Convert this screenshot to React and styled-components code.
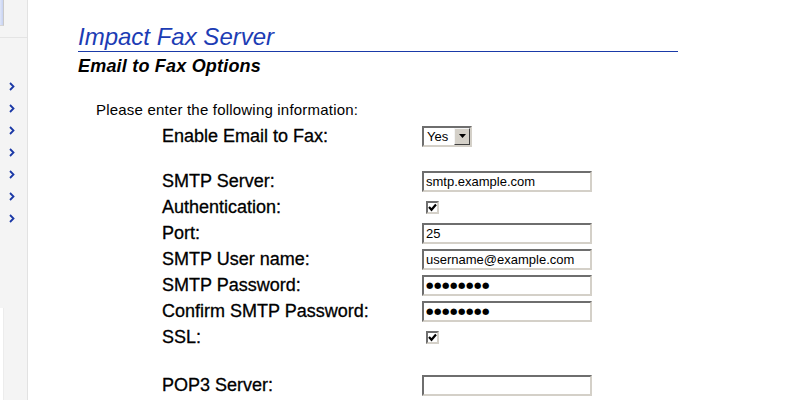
import React from "react";
import styled, { createGlobalStyle } from "styled-components";

const Global = createGlobalStyle`
  html, body { margin: 0; padding: 0; background: #ffffff; }
  body { font-family: "Liberation Sans", Arial, sans-serif; color: #000; }
`;

const Page = styled.div`
  display: flex;
  min-height: 400px;
  width: 800px;
  overflow: hidden;
`;

const Sidebar = styled.nav`
  position: relative;
  width: 27px;
  flex: none;
  background: #f4f4f4;
  border-right: 1px solid #e2e2e2;
  display: flex;
  flex-direction: column;
`;

const LogoStub = styled.div`
  width: 3px;
  height: 25px;
  background: linear-gradient(90deg, #dfe6f8, #c7d2f2);
  border-right: 1px solid #c9c9c9;
  border-bottom: 1px solid #d6d6d6;
`;

const SideRule = styled.div`
  margin-top: 11px;
  height: 1px;
  background: #e4e4e4;
`;

const NavList = styled.ul`
  list-style: none;
  margin: 44px 0 0 0;
  padding: 0;
  display: flex;
  flex-direction: column;
  gap: 13px;
`;

const NavItem = styled.li`
  height: 9px;
  padding-left: 9px;
  display: flex;
  align-items: center;
  color: #1a38a6;
`;

const WhiteStrip = styled.div`
  position: absolute;
  left: 0;
  top: 308px;
  bottom: 0;
  width: 3px;
  background: #ffffff;
  border-right: 1px solid #ececec;
`;

const Main = styled.main`
  flex: 1;
  padding-left: 50px;
`;

const Title = styled.h1`
  margin: 0;
  padding-top: 23px;
  width: 600px;
  font-size: 24px;
  line-height: 28px;
  font-style: italic;
  font-weight: normal;
  color: #1c3cb4;
  border-bottom: 1px solid #1a3aa8;
`;

const Subtitle = styled.h2`
  margin: 3px 0 0 0;
  font-size: 18px;
  line-height: 22px;
  font-style: italic;
  font-weight: bold;
  letter-spacing: 0.2px;
`;

const Intro = styled.p`
  margin: 24px 0 0 18px;
  font-size: 15px;
  line-height: 18px;
  letter-spacing: 0.2px;
`;

const Form = styled.div`
  margin: 4px 0 0 84px;
  display: grid;
  grid-template-columns: 260px 180px;
`;

const Label = styled.div`
  height: 26px;
  display: flex;
  align-items: center;
  font-size: 18px;
  -webkit-text-stroke: 0.3px #000;
`;

const Cell = styled.div`
  height: 26px;
  display: flex;
  align-items: center;
`;

const Spacer = styled.div`
  grid-column: 1 / -1;
  height: ${(p) => p.$h}px;
`;

const TextInput = styled.input`
  appearance: none;
  box-sizing: border-box;
  width: 170px;
  height: 21px;
  margin: 0;
  padding: 0 0 0 2px;
  font-family: "Liberation Sans", Arial, sans-serif;
  font-size: 13px;
  color: #000;
  background: #fff;
  border-style: solid;
  border-width: 2px;
  border-color: #6e6e6e #d4d0c8 #d4d0c8 #6e6e6e;
  outline: none;
`;

const Dots = styled(TextInput)`
  font-family: "DejaVu Sans", sans-serif;
  font-size: 8.5px;
  letter-spacing: 0.6px;
  padding-left: 2px;
`;

const Select = styled.div`
  box-sizing: border-box;
  width: 50px;
  height: 21px;
  display: flex;
  align-items: stretch;
  border-style: solid;
  border-width: 2px;
  border-color: #6e6e6e #d4d0c8 #d4d0c8 #6e6e6e;
  background: #fff;
`;

const SelectValue = styled.span`
  flex: 1;
  display: flex;
  align-items: center;
  padding-left: 3px;
  font-size: 13px;
`;

const SelectButton = styled.span`
  width: 16px;
  box-sizing: border-box;
  background: #d4d0c8;
  border-style: solid;
  border-width: 1px;
  border-color: #f4f4f4 #404040 #404040 #f4f4f4;
  display: flex;
  align-items: center;
  justify-content: center;
`;

const Check = styled.span`
  box-sizing: border-box;
  width: 13px;
  height: 13px;
  margin-left: 4px;
  background: #fff;
  border-style: solid;
  border-width: 2px;
  border-color: #6e6e6e #d4d0c8 #d4d0c8 #6e6e6e;
  display: flex;
  align-items: center;
  justify-content: center;
`;

const Chevron = () => (
  <svg width="6" height="9" viewBox="0 0 6 9">
    <polyline points="1,1 4.5,4.5 1,8" fill="none" stroke="currentColor" strokeWidth="1.8" />
  </svg>
);

const Tick = () => (
  <svg width="9" height="9" viewBox="0 0 9 9">
    <polyline points="1,4 3.5,6.8 8,1.5" fill="none" stroke="#000" strokeWidth="2.2" />
  </svg>
);

export default function App() {
  return (
    <>
      <Global />
      <Page>
        <Sidebar>
          <LogoStub />
          <SideRule />
          <NavList>
            {Array.from({ length: 7 }).map((_, i) => (
              <NavItem key={i}>
                <Chevron />
              </NavItem>
            ))}
          </NavList>
          <WhiteStrip />
        </Sidebar>
        <Main>
          <Title>Impact Fax Server</Title>
          <Subtitle>Email to Fax Options</Subtitle>
          <Intro>Please enter the following information:</Intro>
          <Form>
            <Label>Enable Email to Fax:</Label>
            <Cell>
              <Select>
                <SelectValue>Yes</SelectValue>
                <SelectButton>
                  <svg width="7" height="4" viewBox="0 0 7 4">
                    <polygon points="0,0 7,0 3.5,4" fill="#000" />
                  </svg>
                </SelectButton>
              </Select>
            </Cell>
            <Spacer $h={19} />
            <Label>SMTP Server:</Label>
            <Cell><TextInput readOnly value="smtp.example.com" /></Cell>
            <Label>Authentication:</Label>
            <Cell><Check><Tick /></Check></Cell>
            <Label>Port:</Label>
            <Cell><TextInput readOnly value="25" /></Cell>
            <Label>SMTP User name:</Label>
            <Cell><TextInput readOnly value="username@example.com" /></Cell>
            <Label>SMTP Password:</Label>
            <Cell><Dots readOnly value="●●●●●●●●" /></Cell>
            <Label>Confirm SMTP Password:</Label>
            <Cell><Dots readOnly value="●●●●●●●●" /></Cell>
            <Label>SSL:</Label>
            <Cell><Check><Tick /></Check></Cell>
            <Spacer $h={22} />
            <Label>POP3 Server:</Label>
            <Cell><TextInput readOnly value="" /></Cell>
          </Form>
        </Main>
      </Page>
    </>
  );
}
